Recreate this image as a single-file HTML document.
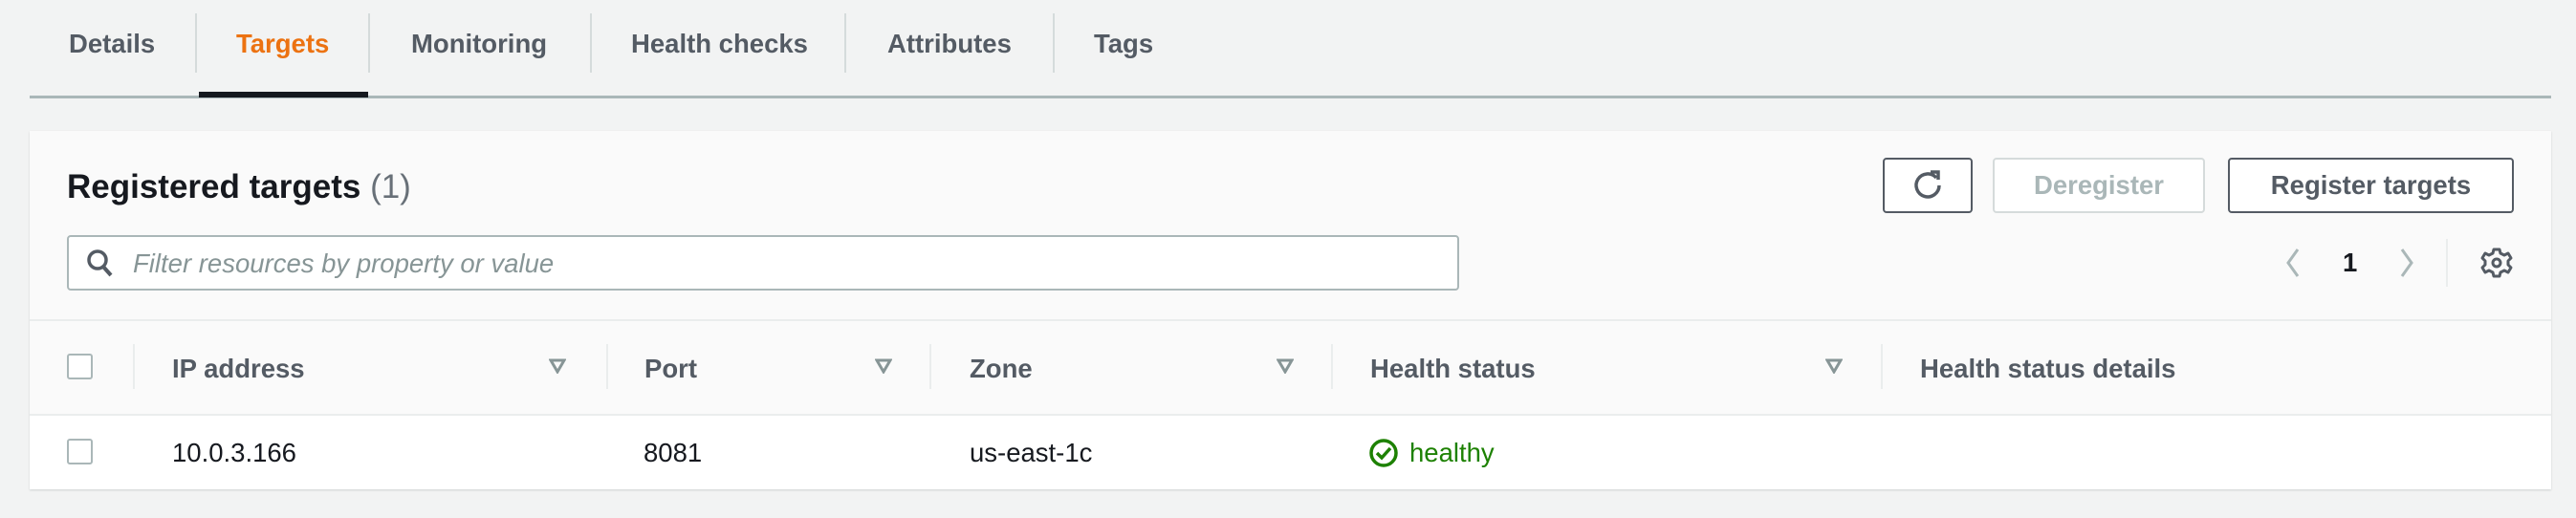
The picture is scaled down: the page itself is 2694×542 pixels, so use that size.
<!DOCTYPE html>
<html><head><meta charset="utf-8"><style>
*{box-sizing:border-box;margin:0;padding:0}
body{width:2694px;height:542px;background:#f2f3f3;font-family:"Liberation Sans",Arial,sans-serif;position:relative;overflow:hidden;color:#16191f}
.a{position:absolute;white-space:nowrap}
.tab{font-size:27.5px;font-weight:bold;color:#545b64;top:30px}
.sep{position:absolute;top:14px;height:62px;width:2px;background:#d5dbdb}
.hd{font-size:27.5px;font-weight:bold;color:#545b64;top:370px}
.cs{position:absolute;top:360px;height:47px;width:2px;background:#eaeded}
.td{font-size:27.5px;top:458px}
.cb{position:absolute;left:70px;width:27px;height:27px;border:2px solid #aab7b8;border-radius:3px;background:#fff}
.btn{position:absolute;top:165px;height:58px;border:2px solid #545b64;border-radius:4px;background:#fff;font-size:27.5px;font-weight:bold;color:#545b64;text-align:center;line-height:54px}
</style></head><body>
<div class="a tab" style="left:72px">Details</div>
<div class="sep" style="left:204px"></div>
<div class="a tab" style="left:247px;color:#ec7211">Targets</div>
<div class="sep" style="left:385px"></div>
<div class="a tab" style="left:430px">Monitoring</div>
<div class="sep" style="left:617px"></div>
<div class="a tab" style="left:660px">Health checks</div>
<div class="sep" style="left:883px"></div>
<div class="a tab" style="left:928px">Attributes</div>
<div class="sep" style="left:1101px"></div>
<div class="a tab" style="left:1144px">Tags</div>
<div class="a" style="left:31px;top:100px;width:2637px;height:3px;background:#aab7b8"></div>
<div class="a" style="left:208px;top:96px;width:177px;height:6px;background:#16191f"></div>

<div class="a" style="left:31px;top:137px;width:2637px;height:375px;background:#fafafa;box-shadow:0 1px 2px rgba(0,28,36,.15)"></div>
<div class="a" style="left:31px;top:334px;width:2637px;height:2px;background:#eaeded"></div>
<div class="a" style="left:31px;top:433px;width:2637px;height:79px;background:#fff;border-top:2px solid #eaeded"></div>

<div class="a" style="left:70px;top:176px;font-size:35px;font-weight:bold">Registered targets <span style="font-weight:normal;color:#687078">(1)</span></div>
<div class="a" style="left:70px;top:246px;width:1456px;height:58px;border:2px solid #aab7b8;border-radius:4px;background:#fff"></div>
<svg class="a" style="left:90px;top:260px" width="30" height="32" viewBox="0 0 30 32"><circle cx="12" cy="12" r="9" fill="none" stroke="#545b64" stroke-width="3.5"/><path d="M18 19 L26 28" stroke="#545b64" stroke-width="4"/></svg>
<div class="a" style="left:139px;top:260px;font-size:27.5px;font-style:italic;color:#879596">Filter resources by property or value</div>

<div class="btn" style="left:1969px;width:94px"><svg width="36" height="36" viewBox="0 0 36 36" style="margin-top:9px"><path d="M27 10 A12 12 0 1 0 30 18" fill="none" stroke="#545b64" stroke-width="3.5"/><path d="M21 4 L29 4 L29 12" fill="none" stroke="#545b64" stroke-width="3.5"/></svg></div>
<div class="btn" style="left:2084px;width:222px;border-color:#d5dbdb;color:#aab7b8">Deregister</div>
<div class="btn" style="left:2330px;width:299px">Register targets</div>

<svg class="a" style="left:2388px;top:258px" width="20" height="34" viewBox="0 0 20 34"><path d="M15 3 L5 17 L15 31" fill="none" stroke="#aab7b8" stroke-width="3"/></svg>
<div class="a" style="left:2450px;top:259px;font-size:27.5px;font-weight:bold">1</div>
<svg class="a" style="left:2507px;top:258px" width="20" height="34" viewBox="0 0 20 34"><path d="M5 3 L15 17 L5 31" fill="none" stroke="#aab7b8" stroke-width="3"/></svg>
<div class="a" style="left:2558px;top:250px;width:2px;height:50px;background:#eaeded"></div>
<svg class="a" style="left:2594px;top:258px" width="34" height="34" viewBox="0 0 34 34"><path d="M14 3h6l1 4 4 2 4-2 3 5-3 3v4l3 3-3 5-4-2-4 2-1 4h-6l-1-4-4-2-4 2-3-5 3-3v-4l-3-3 3-5 4 2 4-2z" fill="none" stroke="#545b64" stroke-width="3" stroke-linejoin="round"/><circle cx="17" cy="17" r="4" fill="none" stroke="#545b64" stroke-width="3"/></svg>

<div class="cb" style="top:370px"></div>
<div class="cs" style="left:139px"></div>
<div class="a hd" style="left:180px">IP address</div>
<svg class="a" style="left:574px;top:375px" width="18" height="16"><path d="M2 2h14L9 14z" fill="none" stroke="#879596" stroke-width="3"/></svg>
<div class="cs" style="left:634px"></div>
<div class="a hd" style="left:674px">Port</div>
<svg class="a" style="left:915px;top:375px" width="18" height="16"><path d="M2 2h14L9 14z" fill="none" stroke="#879596" stroke-width="3"/></svg>
<div class="cs" style="left:972px"></div>
<div class="a hd" style="left:1014px">Zone</div>
<svg class="a" style="left:1335px;top:375px" width="18" height="16"><path d="M2 2h14L9 14z" fill="none" stroke="#879596" stroke-width="3"/></svg>
<div class="cs" style="left:1392px"></div>
<div class="a hd" style="left:1433px">Health status</div>
<svg class="a" style="left:1909px;top:375px" width="18" height="16"><path d="M2 2h14L9 14z" fill="none" stroke="#879596" stroke-width="3"/></svg>
<div class="cs" style="left:1967px"></div>
<div class="a hd" style="left:2008px">Health status details</div>

<div class="cb" style="top:459px"></div>
<div class="a td" style="left:180px">10.0.3.166</div>
<div class="a td" style="left:673px">8081</div>
<div class="a td" style="left:1014px">us-east-1c</div>
<svg class="a" style="left:1431px;top:458px" width="32" height="32" viewBox="0 0 32 32"><circle cx="16" cy="16" r="13" fill="none" stroke="#1d8102" stroke-width="3.5"/><path d="M9 16 L14 21 L23 11" fill="none" stroke="#1d8102" stroke-width="3.5"/></svg>
<div class="a td" style="left:1474px;color:#1d8102">healthy</div>
</body></html>
